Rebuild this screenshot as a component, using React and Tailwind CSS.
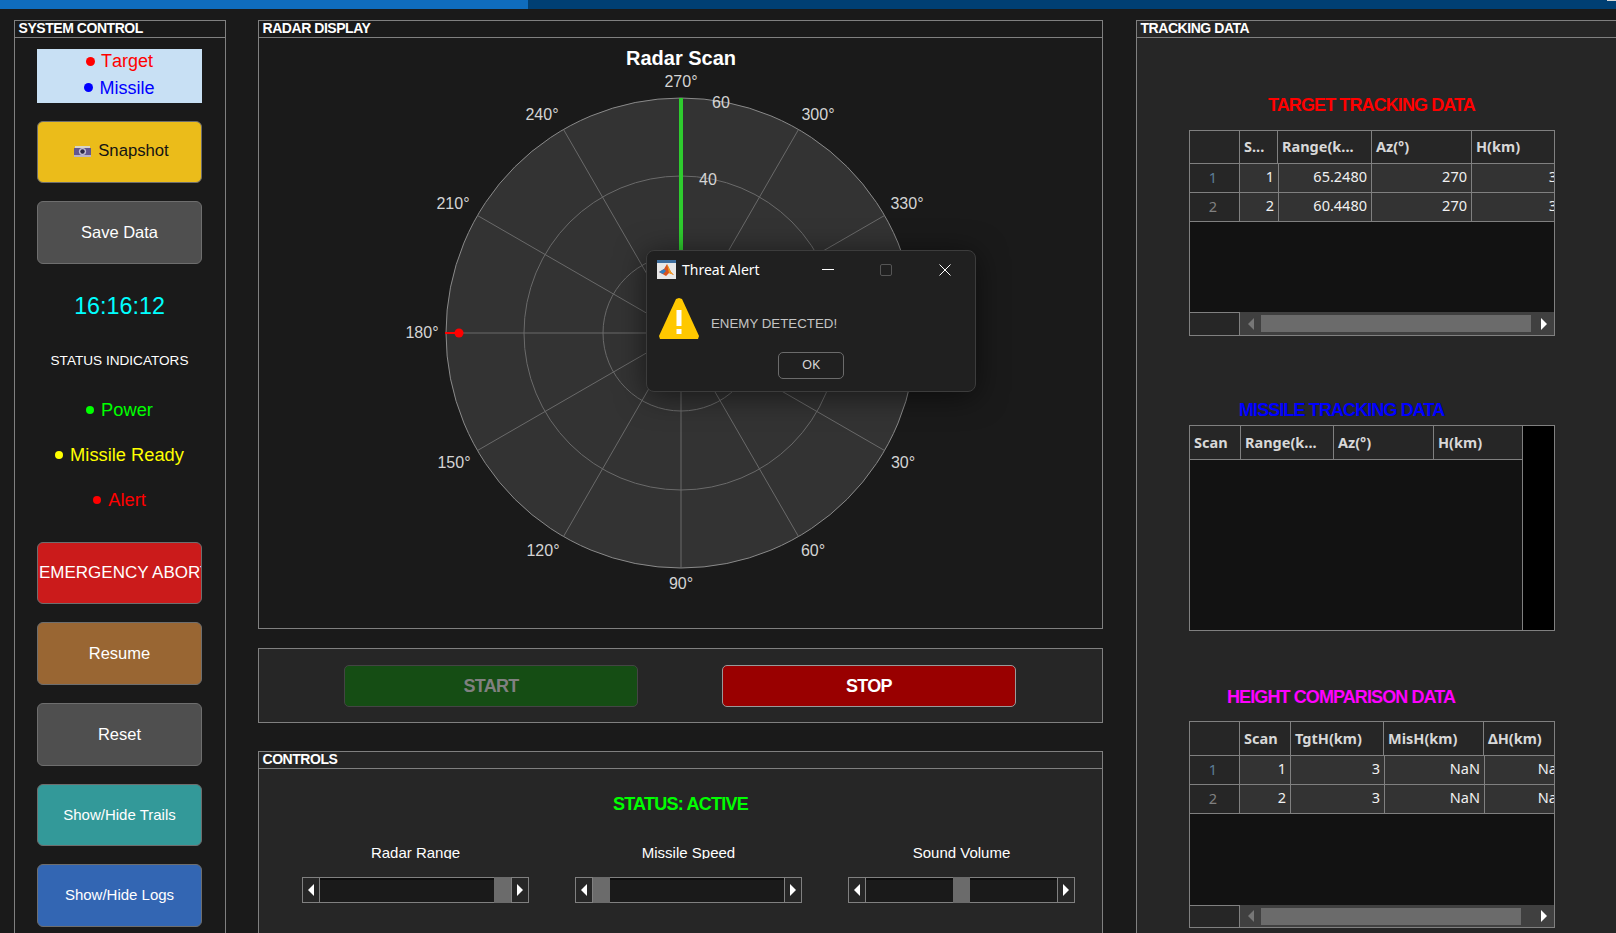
import React from 'react';

const legend = [
  { label: 'Target', dot: 'bg-[#ff0000]', text: 'text-[#ff0000]' },
  { label: 'Missile', dot: 'bg-[#0000ff]', text: 'text-[#0000ff]' },
];

const spokes = [0, 30, 60, 90, 120, 150, 180, 210, 240, 270, 300, 330];

const angleLabels = [
  { text: '270°', x: 422, y: 49 },
  { text: '240°', x: 283, y: 82 },
  { text: '300°', x: 559, y: 82 },
  { text: '210°', x: 194, y: 171 },
  { text: '330°', x: 648, y: 171 },
  { text: '180°', x: 163, y: 300 },
  { text: '150°', x: 195, y: 430 },
  { text: '30°', x: 644, y: 430 },
  { text: '120°', x: 284, y: 518 },
  { text: '60°', x: 554, y: 518 },
  { text: '90°', x: 422, y: 551 },
];

const Panel = ({ title, className, children }) => (
  <div className={`border border-[#808080] ${className}`}>
    {title && (
      <div className="h-[17px] border-b border-[#808080] pl-[3.5px] text-[14px] leading-[15px] font-bold tracking-[-0.45px] text-white">
        {title}
      </div>
    )}
    {children}
  </div>
);

const ActionButton = ({ className, children }) => (
  <div className={`flex items-center justify-center rounded-[6px] border border-[#6e6e6e] text-white ${className}`}>
    {children}
  </div>
);

const CameraIcon = () => (
  <svg width="17" height="11" viewBox="0 0 17 11">
    <rect x="1" y="0" width="15" height="2" fill="#d8d4c8" />
    <rect x="0" y="2" width="17" height="7" fill="#63568f" />
    <rect x="0" y="9" width="17" height="2" fill="#b8b2c8" />
    <circle cx="8.5" cy="5.5" r="3.6" fill="#c4c0d4" />
    <circle cx="8.5" cy="5.5" r="2.2" fill="#2d2848" />
  </svg>
);

const Indicator = ({ label, dot, text, className }) => (
  <div className={`flex h-[22px] items-center justify-center gap-[7px] text-[18.3px] ${text} ${className}`}>
    <span className={`h-[8px] w-[8px] rounded-full ${dot}`} />
    {label}
  </div>
);

const LeftPanel = () => (
  <Panel title="SYSTEM CONTROL" className="h-[960px] w-[212px] shrink-0 bg-[#1a1a1a]">
    <div className="flex flex-col pt-[11px] pl-[22px]">
      <div className="flex h-[54px] w-[165px] flex-col items-center justify-center bg-[#c8e0f4] pb-[3px] text-[18px] leading-[26.5px] [font-kerning:none]">
        {legend.map((item) => (
          <div key={item.label} className={`flex items-center gap-[6px] ${item.text}`}>
            <span className={`h-[9px] w-[9px] rounded-full ${item.dot}`} />
            {item.label}
          </div>
        ))}
      </div>
      <ActionButton className="mt-[18px] h-[62px] w-[165px] gap-[7px] bg-[#ebbc1a] pb-[2px] pl-[4px] text-[16.7px] !text-[#141414]">
        <CameraIcon />
        Snapshot
      </ActionButton>
      <ActionButton className="mt-[18px] h-[63px] w-[165px] bg-[#4f4f4f] text-[16.5px]">Save Data</ActionButton>
      <div className="mt-[28px] h-[28px] w-[165px] text-center text-[23.3px] leading-[28px] text-[#00ffff]">16:16:12</div>
      <div className="mt-[32px] h-[18px] w-[165px] text-center text-[13.6px] leading-[18px] text-white">STATUS INDICATORS</div>
      <Indicator label="Power" dot="bg-[#00ff00]" text="text-[#00ff00]" className="mt-[29px] w-[165px]" />
      <Indicator label="Missile Ready" dot="bg-[#ffff00]" text="text-[#ffff00]" className="mt-[23px] w-[165px]" />
      <Indicator label="Alert" dot="bg-[#ff0000]" text="text-[#ff0000]" className="mt-[23px] w-[165px]" />
      <ActionButton className="mt-[31px] h-[62px] w-[165px] !justify-start overflow-hidden bg-[#cb1b1b] pl-[1px] text-[17px] whitespace-nowrap">
        EMERGENCY ABORT
      </ActionButton>
      <ActionButton className="mt-[18px] h-[63px] w-[165px] bg-[#996633] text-[16.5px]">Resume</ActionButton>
      <ActionButton className="mt-[18px] h-[63px] w-[165px] bg-[#4f4f4f] text-[16.5px]">Reset</ActionButton>
      <ActionButton className="mt-[18px] h-[62px] w-[165px] bg-[#339999] text-[15px]">Show/Hide Trails</ActionButton>
      <ActionButton className="mt-[18px] h-[63px] w-[165px] bg-[#3366b3] text-[15px]">Show/Hide Logs</ActionButton>
    </div>
  </Panel>
);

const RadarChart = () => {
  const cx = 422;
  const cy = 295;
  return (
    <svg width="843" height="590" viewBox="0 0 843 590" className="block">
      <circle cx={cx} cy={cy} r="235" fill="#333333" stroke="#8a8a8a" strokeWidth="1" />
      <circle cx={cx} cy={cy} r="157" fill="none" stroke="#6a6a6a" strokeWidth="1" />
      <circle cx={cx} cy={cy} r="78" fill="none" stroke="#6a6a6a" strokeWidth="1" />
      {spokes.map((deg) => (
        <line
          key={deg}
          x1={cx}
          y1={cy}
          x2={cx + 235 * Math.cos((deg * Math.PI) / 180)}
          y2={cy + 235 * Math.sin((deg * Math.PI) / 180)}
          stroke="#6a6a6a"
          strokeWidth="1"
        />
      ))}
      <line x1={cx} y1={cy} x2={cx} y2={60} stroke="#2ecc2e" strokeWidth="4" />
      <line x1="186" y1={cy} x2="200" y2={cy} stroke="#ff0000" strokeWidth="2" />
      <circle cx="200" cy={cy} r="4.5" fill="#ff0000" />
      <text x={cx} y="27" textAnchor="middle" fontSize="20" fontWeight="700" fill="#ffffff">Radar Scan</text>
      {angleLabels.map((item) => (
        <text key={item.text} x={item.x} y={item.y} textAnchor="middle" fontSize="16" fill="#d4d4d4">{item.text}</text>
      ))}
      <text x="462" y="70" textAnchor="middle" fontSize="16" fill="#d4d4d4">60</text>
      <text x="449" y="147" textAnchor="middle" fontSize="16" fill="#d4d4d4">40</text>
    </svg>
  );
};

const Arrow = ({ dir, color = 'white', className = '' }) => (
  <span
    className={`h-0 w-0 border-y-[6px] border-y-transparent ${
      dir === 'left' ? `border-r-[6px] ${color === 'dim' ? 'border-r-[#777777]' : 'border-r-white'}` : 'border-l-[6px] border-l-white'
    } ${className}`}
  />
);

const Slider = ({ label, offset }) => (
  <div className="w-[227px]">
    <div className="h-[13px] overflow-hidden text-center text-[15px] leading-[14px] text-white">{label}</div>
    <div className="mt-[18px] flex h-[26px] border border-[#808080] bg-[#1a1a1a]">
      <div className="flex w-[17px] shrink-0 items-center justify-center border-r border-[#808080] bg-[#262626]">
        <Arrow dir="left" />
      </div>
      <div className="flex-1 border-t-2 border-[#0c0c0c]">
        <div className={`-mt-[3px] h-[26px] w-[17px] bg-[#6b6b6b] ${offset}`} />
      </div>
      <div className="flex w-[17px] shrink-0 items-center justify-center border-l border-[#808080] bg-[#262626]">
        <Arrow dir="right" />
      </div>
    </div>
  </div>
);

const MiddleColumn = () => (
  <div className="w-[845px] shrink-0">
    <Panel title="RADAR DISPLAY" className="h-[609px] bg-[#1a1a1a]">
      <RadarChart />
    </Panel>
    <Panel className="mt-[19px] flex h-[75px] gap-[84px] bg-[#262626] pt-[16px] pl-[85px] text-[18px] font-bold tracking-[-0.7px]">
      <div className="flex h-[42px] w-[294px] items-center justify-center rounded-[5px] border border-[#444444] bg-[#154d14] text-[#808080]">START</div>
      <div className="flex h-[42px] w-[294px] items-center justify-center rounded-[5px] border border-[#999999] bg-[#990000] text-white">STOP</div>
    </Panel>
    <Panel title="CONTROLS" className="mt-[28px] h-[240px] bg-[#262626]">
      <div className="mt-[24px] h-[22px] text-center text-[18px] leading-[22px] font-bold tracking-[-0.75px] text-[#00ff00]">STATUS: ACTIVE</div>
      <div className="mt-[31px] flex gap-[46px] pl-[43px]">
        <Slider label="Radar Range" offset="ml-[174px]" />
        <Slider label="Missile Speed" offset="ml-0" />
        <Slider label="Sound Volume" offset="ml-[87px]" />
      </div>
    </Panel>
  </div>
);

const Scrollbar = ({ thumb, height }) => (
  <div className={`flex ${height}`}>
    <div className="w-[50px] shrink-0 border-t border-r border-[#808080] bg-[#262626]" />
    <div className="flex flex-1 items-center bg-[#404040]">
      <Arrow dir="left" color="dim" className="ml-[8px]" />
      <div className={`ml-[7px] h-[17px] bg-[#6b6b6b] ${thumb}`} />
      <Arrow dir="right" className="ml-auto mr-[7px]" />
    </div>
  </div>
);

const HeaderCell = ({ width, children, last }) => (
  <div className={`flex shrink-0 items-center pl-[4px] ${width} ${last ? '' : 'border-r border-[#808080]'}`}>{children}</div>
);

const BodyCell = ({ width, children }) => (
  <div className={`flex shrink-0 items-center justify-end border-r border-[#808080] bg-[#333333] pr-[4px] pb-[2px] ${width}`}>{children}</div>
);

const DataTable = ({ columns, rows, headerHeight, emptyHeight, thumb, barHeight }) => (
  <div className="h-fit w-[366px] overflow-hidden border border-[#808080] bg-[#121212] [font-family:'Noto_Sans',sans-serif]">
    <div className={`flex border-b border-[#808080] bg-[#262626] text-[14.5px] font-bold text-[#d8d8d8] ${headerHeight}`}>
      <div className="w-[50px] shrink-0 border-r border-[#808080]" />
      {columns.map((col, i) => (
        <HeaderCell key={col.title} width={col.head} last={i === columns.length - 1}>{col.title}</HeaderCell>
      ))}
    </div>
    {rows.map((row, r) => (
      <div key={r} className="flex h-[29px] border-b border-[#808080] bg-[#262626] text-[14.5px] text-[#f0f0f0]">
        <div className={`flex w-[50px] shrink-0 items-center justify-center border-r border-[#808080] pr-[3px] ${r === 0 ? 'text-[#5d7f99]' : 'text-[#808080]'}`}>{r + 1}</div>
        {row.map((value, c) => (
          <BodyCell key={c} width={columns[c].cell}>{value}</BodyCell>
        ))}
      </div>
    ))}
    <div className={emptyHeight} />
    <Scrollbar thumb={thumb} height={barHeight} />
  </div>
);

const targetColumns = [
  { title: 'S...', head: 'w-[38px]', cell: 'w-[39px]' },
  { title: 'Range(k...', head: 'w-[94px]', cell: 'w-[93px]' },
  { title: 'Az(°)', head: 'w-[100px]', cell: 'w-[100px]' },
  { title: 'H(km)', head: 'w-[90px]', cell: 'w-[90px]' },
];

const heightColumns = [
  { title: 'Scan', head: 'w-[51px]', cell: 'w-[51px]' },
  { title: 'TgtH(km)', head: 'w-[93px]', cell: 'w-[94px]' },
  { title: 'MisH(km)', head: 'w-[100px]', cell: 'w-[100px]' },
  { title: 'ΔH(km)', head: 'w-[88px]', cell: 'w-[88px]' },
];

const RightPanel = () => (
  <Panel title="TRACKING DATA" className="h-[960px] w-[500px] shrink-0 bg-[#262626]">
    <div className="flex flex-col pl-[52px]">
      <div className="mt-[56px] ml-[79px] h-[22px] text-[18px] leading-[22px] font-bold tracking-[-0.9px] text-[#ff0000]">TARGET TRACKING DATA</div>
      <div className="mt-[14px]">
        <DataTable
          columns={targetColumns}
          rows={[
            ['1', '65.2480', '270', '3'],
            ['2', '60.4480', '270', '3'],
          ]}
          headerHeight="h-[33px]"
          emptyHeight="h-[90px]"
          thumb="w-[270px]"
          barHeight="h-[23px]"
        />
      </div>
      <div className="mt-[63px] ml-[50px] h-[22px] text-[18px] leading-[22px] font-bold tracking-[-0.9px] text-[#0000ff]">MISSILE TRACKING DATA</div>
      <div className="mt-[4px] flex h-[206px] w-[366px] border border-[#808080] bg-[#121212] [font-family:'Noto_Sans',sans-serif]">
        <div className="flex-1">
          <div className="flex h-[34px] border-b border-[#808080] bg-[#262626] text-[14.5px] font-bold text-[#d8d8d8]">
            <HeaderCell width="w-[51px]">Scan</HeaderCell>
            <HeaderCell width="w-[93px]">Range(k...</HeaderCell>
            <HeaderCell width="w-[100px]">Az(°)</HeaderCell>
            <HeaderCell width="w-[88px]" last>H(km)</HeaderCell>
          </div>
        </div>
        <div className="w-[33px] border-l border-[#808080] bg-black" />
      </div>
      <div className="mt-[55px] ml-[38px] h-[22px] text-[18px] leading-[22px] font-bold tracking-[-0.9px] text-[#ff00ff]">HEIGHT COMPARISON DATA</div>
      <div className="mt-[13px]">
        <DataTable
          columns={heightColumns}
          rows={[
            ['1', '3', 'NaN', 'NaN'],
            ['2', '3', 'NaN', 'NaN'],
          ]}
          headerHeight="h-[34px]"
          emptyHeight="h-[91px]"
          thumb="w-[260px]"
          barHeight="h-[22px]"
        />
      </div>
    </div>
  </Panel>
);

const MatlabIcon = () => (
  <svg width="19" height="19" viewBox="0 0 19 19">
    <rect width="19" height="19" fill="#e8e8e8" />
    <rect width="19" height="3" fill="#3f6f9f" />
    <path d="M2 12 L7 9 L10 4 L14 12 L17 15 L12 13 L9 16 Z" fill="#d9531e" />
    <path d="M2 12 L7 9 L9 11 L6 14 Z" fill="#2f7fc4" />
    <path d="M10 4 L14 12 L17 15 L12 13 Z" fill="#f0a01e" />
  </svg>
);

const WarningIcon = () => (
  <svg width="40" height="41" viewBox="0 0 40 41">
    <path d="M20 0 L23 1 L40 38 L39 41 L1 41 L0 38 L17 1 Z" fill="#ffc800" />
    <rect x="17.5" y="12" width="5" height="16" fill="#ffffff" />
    <rect x="17.5" y="31" width="5" height="5" fill="#ffffff" />
  </svg>
);

const ThreatDialog = () => (
  <div className="absolute top-[250px] left-[646px] h-[142px] w-[330px] rounded-[8px] border border-[#3c3c3c] bg-[#202020] shadow-[0_4px_30px_rgba(0,0,0,0.55)] [font-family:'Noto_Sans',sans-serif]">
    <div className="flex h-[37px] items-center pl-[10px] text-white">
      <MatlabIcon />
      <span className="ml-[6px] w-[130px] text-[14px]">Threat Alert</span>
      <span className="ml-[10px] h-px w-[12px] bg-white" />
      <span className="ml-[46px] h-[12px] w-[12px] rounded-[2px] border border-[#555555]" />
      <svg width="12" height="12" viewBox="0 0 12 12" className="ml-[47px]">
        <path d="M0.5 0.5 L11.5 11.5 M11.5 0.5 L0.5 11.5" stroke="#ffffff" strokeWidth="1" />
      </svg>
    </div>
    <div className="mt-[10px] flex items-center pl-[12px]">
      <WarningIcon />
      <span className="ml-[12px] pt-[10px] text-[13.3px] text-[#c4c4c4] [font-family:'Liberation_Sans',sans-serif]">ENEMY DETECTED!</span>
    </div>
    <div className="mt-[13px] ml-[131px] flex h-[27px] w-[66px] items-center justify-center rounded-[5px] border border-[#6b6b6b] pb-[2px] text-[13px] text-[#d8d8d8]">OK</div>
  </div>
);

const App = () => (
  <div className="relative h-[933px] w-[1616px] overflow-hidden bg-[#1a1a1a] [font-family:'Liberation_Sans',Arial,sans-serif]">
    <div className="flex h-[9px] bg-[#003f73]">
      <div className="h-full w-[528px] bg-[#0f6cbd]" />
      <div className="ml-auto h-px w-[9px] bg-[#d8d8d8]" />
    </div>
    <div className="flex pt-[11px] pl-[14px]">
      <LeftPanel />
      <div className="w-[32px] shrink-0" />
      <MiddleColumn />
      <div className="w-[33px] shrink-0" />
      <RightPanel />
    </div>
    <ThreatDialog />
  </div>
);

export default App;
